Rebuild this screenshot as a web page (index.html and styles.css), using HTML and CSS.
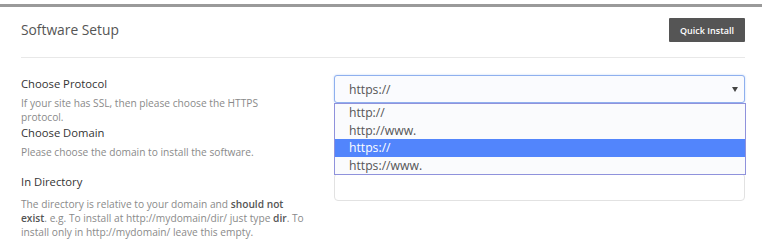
FILE: index.html
```html
<!DOCTYPE html>
<html lang="en">
  <head>
    <meta charset="utf-8" />
    <title>Software Setup</title>
    <link rel="stylesheet" href="styles.css">
  </head>
  <body>
    <div class="panel">
      <div class="panel-head">
        <h2>Software Setup</h2>
        <button class="btn">Quick Install</button>
      </div>

      <!-- protocol -->
      <div class="row row-proto">
        <div class="info">
          <label>Choose Protocol</label>
          <p>If your site has SSL, then please choose the HTTPS protocol.</p>
        </div>
        <div class="field">
          <div class="select open">
            <span>https://</span>
            <i class="caret"></i>
          </div>
          <ul class="options">
            <li>http://</li>
            <li>http://www.</li>
            <li class="active">https://</li>
            <li>https://www.</li>
          </ul>
        </div>
      </div>

      <!-- domain -->
      <div class="row">
        <div class="info">
          <label>Choose Domain</label>
          <p>Please choose the domain to install the software.</p>
        </div>
        <div class="field">
          <div class="select"><span>mydomain.com</span><i class="caret"></i></div>
        </div>
      </div>

      <!-- directory -->
      <div class="row row-dir">
        <div class="info">
          <label>In Directory</label>
          <p>The directory is relative to your domain and <b>should not exist</b>. e.g. To install at http://mydomain/dir/ just type <b>dir</b>. To install only in http://mydomain/ leave this empty.</p>
        </div>
        <div class="field">
          <input class="input" type="text" value="" />
        </div>
      </div>
    </div>
  </body>
</html>
```

FILE: styles.css
```css
body {
  margin: 0;
  font-family: 'Open Sans', sans-serif;
  color: #333;
  background: #fff;
}
.panel {
  box-sizing: border-box;
  width: 762px;
  margin-top: 4px;
  padding: 0 17px 0 21px;
  border-top: 3px solid #9a9a9a;
}
.panel-head {
  display: flex;
  justify-content: space-between;
  align-items: center;
  height: 50px;
  border-bottom: 1px solid #e8e8e8;
  margin-bottom: 17px;
}
.panel-head h2 {
  margin: 0 0 5px;
  font-size: 13.8px;
  font-weight: 400;
  color: #555;
}
.btn {
  width: 76px;
  height: 24px;
  margin-top: -4px;
  padding: 0;
  font-family: inherit;
  font-size: 9px;
  font-weight: 600;
  color: #fff;
  background: #555;
  border: 0;
  border-radius: 1px;
}
.row {
  display: grid;
  grid-template-columns: 1fr 411px;
  column-gap: 14px;
}
.row-dir {
  margin-top: 14px;
}
.info {
  max-width: 288px;
}
.row-proto .info {
  max-width: 270px;
}
.info label {
  display: block;
  font-size: 11.25px;
  line-height: 18px;
  color: #333;
}
.info p {
  margin: 3px 0 0;
  font-size: 10.2px;
  line-height: 14px;
  color: #8a8a8a;
}
.info b {
  font-weight: 600;
  color: #555;
}
.row-dir .info p {
  margin-top: 6px;
}
.field {
  position: relative;
}
.select {
  box-sizing: border-box;
  display: flex;
  align-items: center;
  justify-content: space-between;
  height: 28px;
  padding: 0 6px 0 14px;
  font-size: 12.2px;
  color: #555;
  background: #fafbfe;
  border: 1px solid #ccc;
  border-radius: 3px;
}
.select.open {
  border-color: #8fb0ee;
  box-shadow: 0 0 2px rgba(100, 150, 240, 0.45);
}
.caret {
  width: 0;
  height: 0;
  border-left: 3px solid transparent;
  border-right: 3px solid transparent;
  border-top: 5px solid #444;
}
.options {
  position: absolute;
  top: 28px;
  left: 0;
  right: -1px;
  z-index: 2;
  margin: 0;
  padding: 0;
  list-style: none;
  background: #fafbfd;
  border: 1px solid #8f92dc;
}
.options li {
  height: 17.5px;
  line-height: 17px;
  padding-left: 14px;
  font-size: 12.2px;
  color: #555;
}
.options li.active {
  background: #5285fc;
  color: #fff;
}
.input {
  box-sizing: border-box;
  display: block;
  width: 100%;
  height: 28px;
  border: 1px solid #e2e2e2;
  border-radius: 4px;
  background: #fff;
}
```
